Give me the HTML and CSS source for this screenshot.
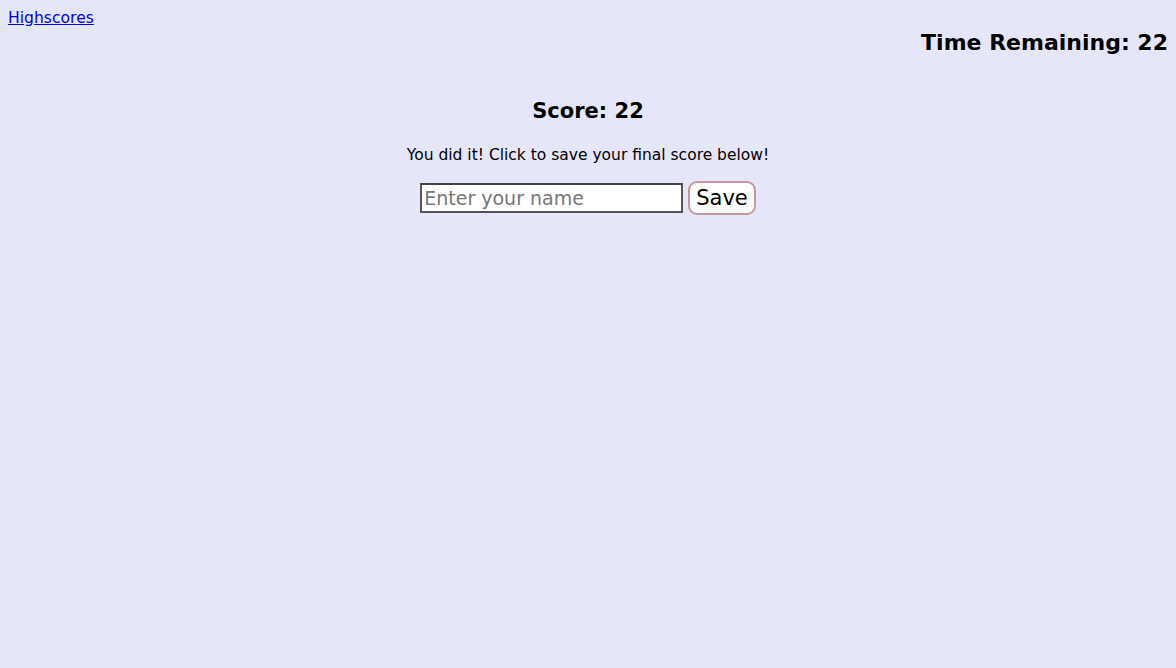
FILE: index.html
```html
<!DOCTYPE html>
<html>
<head>
<meta charset="utf-8">
<link rel="stylesheet" href="styles.css">
</head>
<body>
<header class="top">
  <a class="hs-link" href="#">Highscores</a>
  <h2 class="timer">Time Remaining: 22</h2>
</header>
<main class="end">
  <h2 class="score">Score: 22</h2>
  <p class="msg">You did it! Click to save your final score below!</p>
  <form class="save-form">
    <input class="name-input" type="text" placeholder="Enter your name">
    <button class="save-btn" type="button">Save</button>
  </form>
</main>
</body>
</html>
```
FILE: styles.css
```css
html, body {
  background: #e6e6fa;
}
body {
  margin: 8px;
  font-family: "DejaVu Sans", Verdana, sans-serif;
  color: #000;
}
.top {
  display: flex;
  flex-direction: column;
}
.hs-link {
  color: #0000ee;
  font-size: 15.6px;
  line-height: 20px;
  align-self: flex-start;
}
.timer {
  margin: 1px 0 0;
  text-align: right;
  font-size: 22px;
  line-height: 28px;
}
.end {
  display: flex;
  flex-direction: column;
  align-items: center;
}
.score {
  margin: 40px 0 0;
  font-size: 21px;
  line-height: 28px;
}
.msg {
  margin: 20px 0 0;
  font-size: 15.5px;
  line-height: 20px;
}
.save-form {
  margin-top: 16px;
  display: flex;
  align-items: center;
  gap: 5px;
}
.name-input {
  width: 263px;
  height: 30px;
  box-sizing: border-box;
  border: 2px solid #555;
  border-top-color: #444;
  font-family: "DejaVu Sans", sans-serif;
  font-size: 19px;
  padding: 0 2px;
  background: #fff;
}
.name-input::placeholder {
  color: #777;
}
.save-btn {
  height: 34px;
  box-sizing: border-box;
  padding: 0 6px;
  border: 2px solid #c49a9c;
  border-radius: 9px;
  background: #fff;
  font-family: "DejaVu Sans", sans-serif;
  font-size: 21px;
  color: #000;
}
```
